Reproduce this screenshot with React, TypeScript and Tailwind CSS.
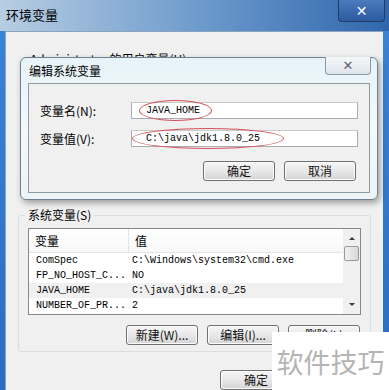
import type { FC, ReactNode } from "react";

const cjk = { fontFamily: '"Noto Sans CJK SC", "Liberation Sans", sans-serif' };
const mono = { fontFamily: '"Liberation Mono", "Noto Sans CJK SC", monospace' };

const rows = [
  { name: "ComSpec", value: "C:\\Windows\\system32\\cmd.exe" },
  { name: "FP_NO_HOST_C...", value: "NO" },
  { name: "JAVA_HOME", value: "C:\\java\\jdk1.8.0_25", selected: true },
  { name: "NUMBER_OF_PR...", value: "2" },
];

const WinButton: FC<{ children: ReactNode; className?: string }> = ({ children, className = "" }) => (
  <button
    className={`h-[20px] w-[72px] rounded-[3px] border border-[#707070] bg-gradient-to-b from-[#f6f6f6] via-[#e8e8e8] to-[#d4d4d4] text-[12px] leading-none text-[#111] shadow-[inset_0_0_0_1px_#fcfcfc] ${className}`}
    style={cjk}
  >
    {children}
  </button>
);

const EditDialog: FC = () => (
  <div className="absolute left-[20px] top-[57px] flex h-[143px] w-[358px] flex-col rounded-[6px] border border-[#6d7f92] bg-gradient-to-b from-[#e6f3f8] via-[#f4f8fa] to-[#eef3f6] px-[7px] pb-[6px] shadow-[2px_3px_6px_rgba(0,0,0,0.35)]">
    <div className="flex h-[25px] items-center justify-between">
      <span className="pl-[1px] text-[12px] text-black" style={cjk}>
        编辑系统变量
      </span>
      <div className="-mr-[1px] mt-[-1px] flex h-[18px] w-[46px] items-center justify-center self-start rounded-b-[4px] border border-t-0 border-[#8a9aa8] bg-gradient-to-b from-[#f4f8fa] to-[#dde6ec]">
        <span className="text-[13px] font-bold leading-none text-[#5a6470]" style={{ fontFamily: '"DejaVu Sans", sans-serif' }}>
          ✕
        </span>
      </div>
    </div>
    <div className="flex flex-1 flex-col border border-[#8e9aa4] bg-[#f0f0f0] px-[11px] pt-[18px]">
      <div className="flex h-[17px] items-center">
        <span className="w-[91px] text-[12px] text-black" style={cjk}>
          变量名(N):
        </span>
        <div className="relative h-[17px] flex-1 border border-[#abadb3] border-t-[#c9c9c9] bg-white pl-[14px] text-[10px] leading-[15px] text-black" style={mono}>
          JAVA_HOME
          <span className="absolute left-[7px] top-[-3px] h-[21px] w-[73px] rounded-[50%] border border-[#d2525a]" />
        </div>
      </div>
      <div className="mt-[11px] flex h-[17px] items-center">
        <span className="w-[91px] text-[12px] text-black" style={cjk}>
          变量值(V):
        </span>
        <div className="relative h-[17px] flex-1 border border-[#abadb3] border-t-[#c9c9c9] bg-white pl-[14px] text-[10px] leading-[15px] text-black" style={mono}>
          C:\java\jdk1.8.0_25
          <span className="absolute left-[0px] top-[-3px] h-[21px] w-[152px] rounded-[50%] border border-[#d2525a]" />
        </div>
      </div>
      <div className="mt-[14px] flex justify-end gap-[9px] pr-[2px]">
        <WinButton>确定</WinButton>
        <WinButton>取消</WinButton>
      </div>
    </div>
  </div>
);

const SystemVars: FC = () => (
  <div className="relative mx-[12px] mt-[6px] h-[142px] rounded-[3px] border border-[#d5dfe5] px-[9px] pt-[12px]">
    <span className="absolute left-[6px] top-[-9px] bg-[#f0f0f0] px-[3px] text-[12px] leading-[16px] text-black" style={cjk}>
      系统变量(S)
    </span>
    <div className="flex h-[87px] border border-[#828790] bg-white">
      <div className="flex flex-1 flex-col overflow-hidden">
        <div className="flex h-[24px] shrink-0 border-b border-[#e5e5e5] bg-gradient-to-b from-white to-[#f7f8f9] text-[12px] text-black" style={cjk}>
          <div className="flex w-[100px] items-center border-r border-[#e5e5e5] pl-[6px]">变量</div>
          <div className="flex items-center pl-[6px]">值</div>
        </div>
        {rows.map((r) => (
          <div
            key={r.name}
            className={`flex h-[15px] shrink-0 items-center text-[10px] leading-none text-black ${r.selected ? "bg-[#f0f0f0]" : ""}`}
            style={mono}
          >
            <span className="w-[100px] pl-[7px]">{r.name}</span>
            <span className="pl-[3px]">{r.value}</span>
          </div>
        ))}
      </div>
      <div className="flex w-[17px] flex-col items-center bg-[#f0f0f0] py-[2px]">
        <span className="mt-[6px] h-0 w-0 border-x-[3px] border-b-[3px] border-x-transparent border-b-[#3a3a3a]" />
        <div className="mt-[6px] h-[15px] w-[15px] rounded-[2px] border border-[#9a9a9a] bg-gradient-to-r from-[#f2f2f2] to-[#d8d8d8]" />
        <div className="flex-1" />
        <span className="mb-[6px] h-0 w-0 border-x-[3px] border-t-[3px] border-x-transparent border-t-[#3a3a3a]" />
      </div>
    </div>
    <div className="mt-[10px] flex justify-end gap-[9px] pr-[1px]">
      <WinButton>新建(W)...</WinButton>
      <WinButton>编辑(I)...</WinButton>
      <WinButton>删除(L)</WinButton>
    </div>
  </div>
);

export default function App() {
  return (
    <div className="relative h-[390px] w-[389px] overflow-hidden bg-gradient-to-b from-[#3b84d8] to-[#2a6cc2]">
      <div className="flex h-[31px] items-start bg-gradient-to-r from-[#b8cde2] via-[#6f9ccd] to-[#2f66ac]">
        <span className="ml-[6px] mt-[7px] text-[13px] leading-[16px] text-black" style={cjk}>
          环境变量
        </span>
        <div className="ml-auto mr-[4px] flex h-[22px] w-[47px] items-center justify-center rounded-b-[4px] border border-t-0 border-[#1e3c66] bg-gradient-to-b from-[#4b7bbd] to-[#2c5c9f]">
          <span className="text-[14px] font-bold leading-none text-white" style={{ fontFamily: '"DejaVu Sans", sans-serif' }}>
            ✕
          </span>
        </div>
      </div>
      <div className="ml-[5px] flex h-[359px] w-[378px] flex-col border-l border-t border-[#8aa4c0] bg-[#f0f0f0]">
        <span className="ml-[24px] mt-[19px] h-[16px] whitespace-nowrap text-[12px] leading-[16px] text-black" style={cjk}>
          Administrator 的用户变量(U)
        </span>
        <div className="h-[148px]" />
        <SystemVars />
        <div className="mt-[18px] flex pl-[214px]">
          <WinButton>确定</WinButton>
        </div>
      </div>
      <EditDialog />
      <div className="absolute left-[272px] top-[332px] flex h-[58px] w-[117px] items-center justify-center whitespace-nowrap bg-white text-[27px] leading-none text-[#b4b4b4]" style={cjk}>
        软件技巧
      </div>
    </div>
  );
}
